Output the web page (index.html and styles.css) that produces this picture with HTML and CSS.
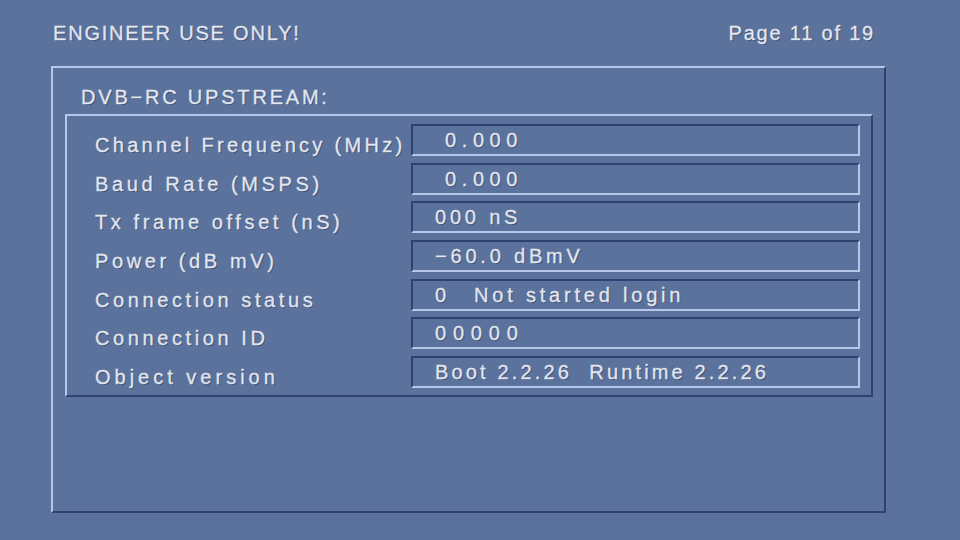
FILE: index.html
```html
<!DOCTYPE html>
<html lang="en">
<head>
  <meta charset="UTF-8" />
  <meta name="viewport" content="width=device-width, initial-scale=1" />
  <title>Engineer Menu</title>
  <link rel="stylesheet" href="styles.css">
</head>
<body>
  <div class="top">
    <span>ENGINEER USE ONLY!</span>
    <span>Page 11 of 19</span>
  </div>

  <div class="panel">
    <div class="panel-title">DVB&minus;RC UPSTREAM:</div>
    <div class="fields">
      <div class="label">Channel Frequency (MHz)</div>
      <div class="value indent num">0.000</div>
      <div class="label">Baud Rate (MSPS)</div>
      <div class="value indent num">0.000</div>
      <div class="label">Tx frame offset (nS)</div>
      <div class="value">000 nS</div>
      <div class="label">Power (dB mV)</div>
      <div class="value">&minus;60.0 dBmV</div>
      <div class="label">Connection status</div>
      <div class="value"><span class="code">0</span>Not started login</div>
      <div class="label">Connection ID</div>
      <div class="value num">00000</div>
      <div class="label wide">Object version</div>
      <div class="value ver">Boot 2.2.26&nbsp; Runtime 2.2.26</div>
    </div>
  </div>
</body>
</html>
```

FILE: styles.css
```css
body {
  margin: 0;
  background: #5b729c;
  font-family: 'Liberation Sans', sans-serif;
  font-size: 20px;
  line-height: 23px;
  color: #e2e6ee;
  letter-spacing: 3.6px;
  -webkit-text-stroke: 0.3px #e2e6ee;
  text-shadow: 1px 1px 0 rgba(40,55,90,0.6);
}
.top {
  display: flex;
  justify-content: space-between;
  padding: 22px 85px 0 53px;
  height: 66px;
  box-sizing: border-box;
  letter-spacing: 1.8px;
}
.panel {
  margin-left: 51px;
  width: 835px;
  height: 447px;
  box-sizing: border-box;
  border: 2px solid;
  border-color: #b7c7e8 #2f4373 #2f4373 #b7c7e8;
  padding: 12px 12px 0 12px;
}
.panel-title {
  padding: 6px 0 0 16px;
  height: 34px;
  box-sizing: border-box;
  letter-spacing: 2.8px;
}
.fields {
  width: 808px;
  height: 283px;
  box-sizing: border-box;
  border: 2px solid;
  border-color: #b7c7e8 #2f4373 #2f4373 #b7c7e8;
  padding: 8px 0 0 28px;
  display: grid;
  grid-template-columns: 316px 449px;
  grid-auto-rows: 32px;
  row-gap: 6.67px;
}
.label {
  padding-top: 10px;
}
.fields .label:first-child {
  letter-spacing: 3.3px;
}
.label.wide {
  letter-spacing: 4px;
}
.value {
  box-sizing: border-box;
  border: 2px solid;
  border-color: #2f4373 #b7c7e8 #b7c7e8 #2f4373;
  padding: 3px 0 0 22px;
  letter-spacing: 3.8px;
}
.value.indent {
  padding-left: 32px;
}
.num {
  letter-spacing: 6.8px;
}
.value.indent.num {
  letter-spacing: 5.6px;
}
.value.ver {
  letter-spacing: 3.15px;
}
.code {
  display: inline-block;
  width: 39px;
}
```
